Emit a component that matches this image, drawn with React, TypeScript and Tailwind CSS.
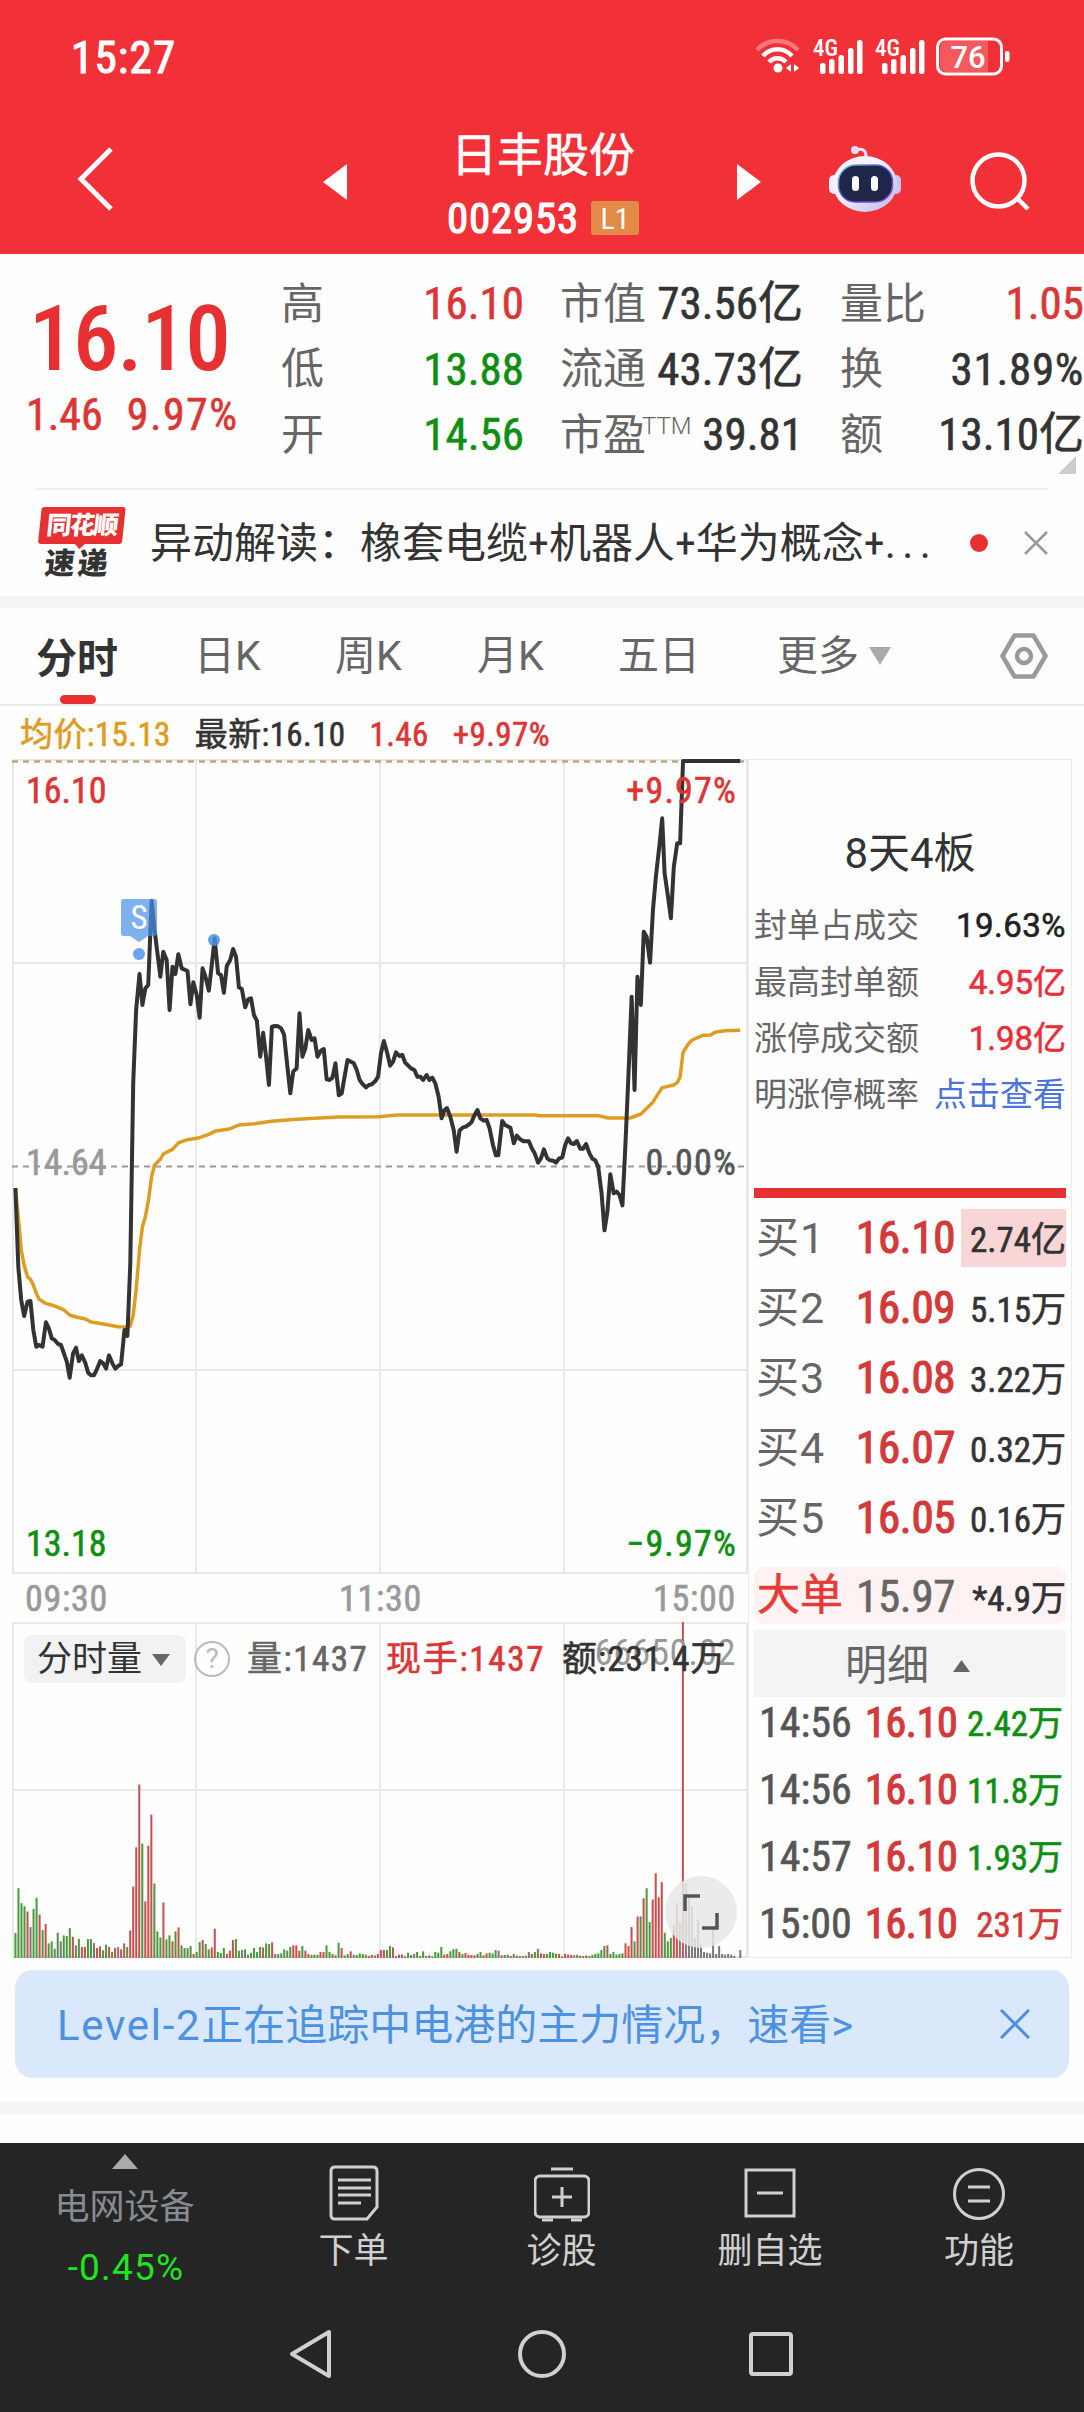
import { ReactNode } from "react";
import clsx from "clsx";

const PRICE_LINE =
    "32,1794 38,2030 44,2130 50,2178 57,2135 63,2133 69,2220 75,2270 81,2265 88,2270 95,2197 101,2215 107,2245 113,2250 120,2262 126,2265 132,2290 138,2315 144,2363 151,2290 157,2273 163,2313 169,2296 176,2318 182,2348 188,2356 194,2356 200,2338 207,2313 213,2320 219,2336 225,2296 232,2320 238,2336 244,2328 250,2323 257,2220 263,2238 269,2020 275,1480 281,1260 288,1152 294,1245 300,1195 306,1185 313,932 319,1020 325,1090 331,1160 337,1085 344,1110 350,1260 356,1130 362,1152 368,1093 375,1135 387,1143 393,1243 399,1177 406,1215 412,1283 418,1135 424,1160 431,1202 437,1125 443,1045 450,1150 456,1155 462,1208 468,1128 475,1110 481,1077 487,1100 493,1192 499,1197 506,1252 512,1228 518,1225 524,1275 530,1292 537,1400 543,1328 549,1400 555,1485 561,1310 567,1308 574,1309 580,1315 586,1333 593,1430 599,1510 605,1445 612,1435 618,1270 624,1400 630,1375 636,1320 643,1350 649,1345 655,1400 662,1382 668,1377 674,1468 680,1470 686,1463 692,1420 699,1516 705,1510 711,1460 717,1410 730,1420 736,1440 742,1470 748,1482 755,1492 761,1485 767,1483 774,1474 780,1460 786,1390 792,1353 799,1390 805,1427 811,1415 817,1387 824,1398 830,1395 836,1418 848,1435 855,1440 861,1460 867,1460 873,1470 880,1455 886,1470 892,1463 898,1480 905,1520 911,1585 917,1560 922,1554 929,1580 936,1620 942,1685 948,1622 955,1612 961,1610 967,1604 973,1596 979,1575 985,1560 991,1585 998,1592 1004,1590 1010,1615 1017,1665 1023,1696 1028,1696 1036,1593 1042,1605 1053,1613 1060,1660 1066,1637 1073,1648 1080,1654 1091,1654 1097,1675 1103,1690 1110,1718 1116,1705 1122,1678 1129,1705 1135,1711 1141,1712 1147,1718 1153,1706 1160,1702 1166,1665 1172,1645 1178,1660 1184,1662 1190,1653 1197,1676 1203,1676 1209,1662 1216,1690 1222,1706 1228,1711 1234,1730 1241,1810 1247,1921 1253,1865 1259,1753 1266,1810 1272,1805 1278,1815 1284,1846 1290,1670 1296,1470 1303,1220 1309,1500 1315,1160 1322,1245 1328,1025 1334,1040 1341,1118 1347,960 1353,860 1360,770 1366,685 1371,850 1378,920 1384,985 1390,830 1397,760 1403,760 1409,513 1527,513";

const AVG_LINE =
    "32,1794 38,1880 44,1980 50,2025 57,2060 63,2068 69,2085 75,2110 81,2128 94,2140 107,2145 120,2152 132,2160 144,2175 157,2181 176,2187 188,2196 213,2202 244,2210 263,2211 269,2208 275,2175 281,2100 288,1980 294,1910 300,1880 306,1835 313,1760 319,1725 331,1708 337,1692 356,1678 369,1658 387,1649 412,1643 431,1633 443,1624 475,1616 493,1605 525,1601 560,1594 612,1588 650,1585 700,1581 780,1580 820,1575 1105,1575 1112,1577 1234,1577 1255,1584 1300,1584 1322,1572 1345,1540 1366,1493 1390,1485 1397,1478 1403,1460 1409,1387 1420,1362 1428,1350 1450,1336 1466,1335 1475,1327 1495,1322 1527,1321";

// one entry per minute: colour letter (g down, r up, k flat) + height
const VOLUME =
    "g75 g210 g165 g156 r140 k93 g148 g181 r131 g84 r102 g44 g50 k28 g76 k50 g68 g66 g90 r64 k38 g57 r33 r33 g57 g57 k45 r30 r35 g23 g40 r33 g18 r30 k33 r26 r44 g33 r83 r215 r333 r522 g344 r170 r338 r431 g224 g80 g62 r167 g56 g68 r50 g80 r92 g38 g30 k30 g36 r12 g18 g48 r54 g42 g26 r32 r88 g18 g15 g30 r12 r22 r54 g57 g22 k24 g26 k10 g16 g30 g18 g33 r32 g44 g42 r47 k12 k12 g14 g26 g22 g33 r38 r38 r22 g36 r22 r12 g9 g10 g9 r18 r18 g38 g18 r12 g8 g46 r30 k8 g12 r20 k10 g9 g14 g12 g10 r6 r9 g8 r12 r24 r24 g24 g36 r32 k6 r10 r10 g5 g16 g9 k12 g18 k6 g20 g6 r8 g5 g18 g16 g33 r10 r12 g20 g26 g28 r18 g12 r15 " +
    "r10 r9 r8 g12 g18 r8 r14 g16 g14 g24 k22 r8 g9 g10 r6 g12 r7 g6 k6 g7 k18 r12 g18 g27 r14 r12 g12 g18 g16 g13 r12 g5 r12 r10 r9 g8 g10 r7 g6 r8 g6 g9 " +
    "g12 g14 g24 g36 r38 g12 g18 g10 g12 g14 r44 r36 r93 g50 r125 g125 r180 g210 g108 r176 r255 r183 r228 g76 g50 g60 r98 r165 k108 r1011 k225 k185 k155 k60 k115 k40 k18 k16 k14 k95 k12 k36 k12 k10 k12 k10 k6 k0 k24";

const BAR_COLOR: Record<string, string> = { g: "#4c9a3f", r: "#c8504e", k: "#7a7a7a" };

// Roboto has nothing between 400 and 500, a thin outline gives the weight in between
const SEMI = "[-webkit-text-stroke:0.6px_currentcolor]";
const STRONG = "[-webkit-text-stroke:1.2px_currentcolor]";

const QUOTES = [
    [
        { label: "高", value: "16.10", color: "text-[#dc3535]" },
        { label: "市值", value: "73.56亿", color: "text-[#333]" },
        { label: "量比", value: "1.05", color: "text-[#dc3535]" },
    ],
    [
        { label: "低", value: "13.88", color: "text-[#0f8f12]" },
        { label: "流通", value: "43.73亿", color: "text-[#333]" },
        { label: "换", value: "31.89%", color: "text-[#333] tracking-[0.7px]" },
    ],
    [
        { label: "开", value: "14.56", color: "text-[#0f8f12]" },
        { label: "市盈", value: "39.81", color: "text-[#333]", sup: "TTM" },
        { label: "额", value: "13.10亿", color: "text-[#333]" },
    ],
];

const SEAL_ROWS = [
    { label: "封单占成交", value: "19.63%", color: "text-[#222]" },
    { label: "最高封单额", value: "4.95亿", color: "text-[#ea2f3b]" },
    { label: "涨停成交额", value: "1.98亿", color: "text-[#ea2f3b]" },
    { label: "明涨停概率", value: "点击查看", color: "text-[#4a74dc]" },
];

const BIDS = [
    { label: "买1", price: "16.10", qty: "2.74亿" },
    { label: "买2", price: "16.09", qty: "5.15万" },
    { label: "买3", price: "16.08", qty: "3.22万" },
    { label: "买4", price: "16.07", qty: "0.32万" },
    { label: "买5", price: "16.05", qty: "0.16万" },
];

const TRADES = [
    { time: "14:56", qty: "2.42万", color: "text-[#0f8f12]" },
    { time: "14:56", qty: "11.8万", color: "text-[#0f8f12]" },
    { time: "14:57", qty: "1.93万", color: "text-[#0f8f12]" },
    { time: "15:00", qty: "231万", color: "text-[#d43a3a]" },
];

export default function App() {
    return (
        <div className="flex h-[2412px] w-[1084px] flex-col overflow-hidden bg-[#fefefe] font-['Roboto','Noto_Sans_CJK_SC',sans-serif] font-stretch-condensed whitespace-nowrap text-[#333]">
            <Header />
            <Quote />
            <News />
            <div className="h-3 shrink-0 bg-[#f4f4f4]" />
            <Tabs />
            <Summary />
            <div className="flex h-[1199px] shrink-0 pl-3">
                <div className="w-[736px]">
                    <PriceChart />
                    <div className={clsx("flex h-[48px] items-center justify-between pt-[2px] pr-[12px] pl-[13px] text-[36px] tracking-[0.7px] text-[#999]", SEMI)}>
                        <span>09:30</span>
                        <span>11:30</span>
                        <span>15:00</span>
                    </div>
                    <VolumeChart />
                </div>
                <SidePanel />
            </div>
            <Banner />
            <div className="mt-6 h-3 shrink-0 bg-[#f4f4f4]" />
            <BottomBar />
        </div>
    );
}

function Header() {
    return (
        <header className="flex h-[254px] shrink-0 flex-col bg-[#f23038] text-white">
            <div className="flex h-[114px] items-center justify-between pr-[73px] pl-[71px]">
                <span className={clsx("pt-[2px] text-[45px] tracking-[1.200px]", STRONG)}>15:27</span>
                <StatusIcons />
            </div>
            <div className="flex h-[140px] items-start pl-[77px]">
                <svg className="mt-[32px] h-[66px] w-[37px]" viewBox="0 0 37 66" fill="none" stroke="#fff" strokeWidth="5">
                    <path d="M34 3 4 33l30 30" />
                </svg>
                <svg className="mt-[50px] ml-[209px] h-9 w-6" viewBox="0 0 24 36"><path d="M24 0v36L0 18z" fill="#fff" /></svg>
                <div className="ml-[88px] flex w-[216px] flex-col items-center">
                    <h1 className={clsx("mt-[13px] text-[46px] leading-[56px] font-normal", SEMI)}>日丰股份</h1>
                    <div className="mt-[13px] flex items-center gap-3">
                        <span className={clsx("text-[43px] leading-[44px] tracking-[0.8px]", STRONG)}>002953</span>
                        <span className="flex h-[34px] w-12 items-center justify-center rounded-[3px] bg-[#e28b49] text-[30px]">L1</span>
                    </div>
                </div>
                <svg className="mt-[50px] ml-[86px] h-9 w-6" viewBox="0 0 24 36"><path d="M0 0v36l24-18z" fill="#fff" /></svg>
                <Robot />
                <svg className="mt-[38px] ml-[69px] h-[60px] w-[61px]" viewBox="0 0 61 60" fill="none" stroke="#fff" strokeWidth="4.5">
                    <circle cx="28.500" cy="28.500" r="26" />
                    <path d="m48 47 10 10" />
                </svg>
            </div>
        </header>
    );
}

function StatusIcons() {
    return (
        <svg className="h-[40px] w-[256px] overflow-visible" viewBox="0 0 256 40" fill="#fff">
            <g fill="none" stroke="#fff" strokeWidth="4.5">
                <path d="M2 13c11-12 30-12 41 0" opacity=".35" />
                <path d="M8 19c8-9 21-9 29 0" />
                <path d="M14 25c5-5 12-5 17 0" />
            </g>
            <circle cx="23" cy="31" r="4.500" />
            <path d="m31 31 5-4v8zM44 31l-5-4v8z" />
            <Signal x={58} />
            <Signal x={120} />
            <rect x="182.500" y="2" width="64" height="35" rx="8" fill="none" stroke="#fff" strokeWidth="3" />
            <path d="M192 4h41v31h-41q-7 0-7-7V11q0-7 7-7" opacity=".2" />
            <rect x="250" y="14" width="4.500" height="11" rx="2" />
            <text x="213" y="30.500" fontSize="31" fontWeight="500" textAnchor="middle" className="font-stretch-normal">76</text>
        </svg>
    );
}

function Signal({ x }: { x: number }) {
    return (
        <g transform={`translate(${x} 0)`}>
            <text x="0" y="19" fontSize="23" fontWeight="500">4G</text>
            <rect x="7" y="26" width="5.500" height="11" rx="2.500" />
            <rect x="16" y="22" width="5.500" height="15" rx="2.500" />
            <rect x="25.500" y="18" width="5.500" height="19" rx="2.500" />
            <rect x="35" y="11" width="5.500" height="26" rx="2.500" />
            <rect x="44" y="3" width="5.500" height="34" rx="2.500" />
        </g>
    );
}

function Robot() {
    return (
        <svg className="mt-[31px] ml-[68px] h-[68px] w-[72px]" viewBox="0 0 72 68">
            <defs>
                <linearGradient id="shell" x1="0" y1="0" x2="1" y2="1">
                    <stop offset=".4" stopColor="#f6f3fc" />
                    <stop offset="1" stopColor="#b9b4ea" />
                </linearGradient>
                <linearGradient id="rim" x1="0" y1="0" x2="1" y2="1">
                    <stop offset="0" stopColor="#7fd6e8" />
                    <stop offset=".5" stopColor="#4a3fc0" />
                    <stop offset="1" stopColor="#a04ee0" />
                </linearGradient>
            </defs>
            <path d="M27 5c6-2 10 0 10 6" fill="none" stroke="#eee6fa" strokeWidth="3" />
            <circle cx="26" cy="5" r="4" fill="#e6dcf8" />
            <rect x="0" y="30" width="10" height="19" rx="5" fill="#f0ecfb" />
            <rect x="62" y="30" width="10" height="19" rx="5" fill="#c9c5f0" />
            <ellipse cx="36" cy="39" rx="32" ry="28" fill="url(#shell)" />
            <rect x="9.500" y="20" width="54" height="37" rx="17" fill="#1e2748" stroke="url(#rim)" strokeWidth="1.500" />
            <rect x="23" y="31" width="7" height="15" rx="3.500" fill="#fff" />
            <rect x="42" y="31" width="7" height="15" rx="3.500" fill="#fff" />
        </svg>
    );
}

function Quote() {
    return (
        <section className="relative flex h-[234px] shrink-0 pt-4">
            <div className="w-[281px] text-[#dc3535]">
                <div className="mt-[27px] pl-[29px] text-[91px] leading-[84px] font-medium tracking-[-1.400px] text-[#e63031]">16.10</div>
                <div className={clsx("mt-[10px] flex gap-[24px] pl-[26px] text-[44px] leading-[48px]", SEMI)}>
                    <span>1.46</span>
                    <span className="tracking-[1.400px]">9.97%</span>
                </div>
            </div>
            <div className="flex-1">
                {QUOTES.map((row, i) => (
                    <div key={i} className="grid h-[65.500px] grid-cols-[243px_36px_243px_37px_244px] items-center text-[45px]">
                        {row.map((cell, j) => (
                            <div key={cell.label} className="flex items-center justify-between" style={{ gridColumn: j * 2 + 1 }}>
                                <span className="flex text-[43px] text-[#666]">
                                    {cell.label}
                                    {cell.sup && <sup className="top-0 mt-2 -ml-1 text-[24px] leading-[30px] font-light font-stretch-normal">{cell.sup}</sup>}
                                </span>
                                <span className={clsx(SEMI, cell.color)}>{cell.value}</span>
                            </div>
                        ))}
                    </div>
                ))}
            </div>
            <svg className="absolute right-2 bottom-[14px] h-[18px] w-[18px]" viewBox="0 0 18 18"><path d="M18 0v18H0z" fill="#ccc" /></svg>
        </section>
    );
}

function News() {
    return (
        <section className="flex h-[108px] shrink-0 items-center px-9">
            <div className="flex h-full flex-1 items-center border-t-2 border-[#efefef]">
                <div className="flex w-[88px] -skew-x-6 flex-col items-center">
                    <div className="relative flex h-[37px] w-[84px] items-center justify-center rounded-[3px] bg-[#e63031] text-[25px] font-black tracking-[-1.500px] text-white">
                        同花顺
                        <span className="absolute -bottom-[5px] h-0 w-0 border-x-[6px] border-t-[6px] border-x-transparent border-t-[#e63031]" />
                    </div>
                    <div className="mt-1 text-[30px] leading-[31px] font-black tracking-[3px]">速递</div>
                </div>
                <span className="ml-[26px] w-[785px] text-[42px]">
                    异动解读：橡套电缆+机器人+华为概念+<span className="tracking-[6.500px]">...</span>
                </span>
                <span className="ml-[35px] h-[18px] w-[18px] rounded-full bg-[#e63031]" />
                <svg className="ml-auto h-6 w-6" viewBox="0 0 24 24" stroke="#999" strokeWidth="2.500"><path d="m1 1 22 22M23 1 1 23" /></svg>
            </div>
        </section>
    );
}

function Tabs() {
    return (
        <nav className="flex h-[98px] shrink-0 items-center border-b-2 border-[#e8e8e8] pl-9 text-[41px] text-[#666]">
            <div className="relative flex h-full w-[158px] items-center font-['Noto_Sans_CJK_SC',sans-serif] font-bold text-[#333]">
                分时
                <span className="absolute bottom-0 left-6 h-[9px] w-9 rounded-full bg-[#e63031]" />
            </div>
            <span className="w-[141px] pt-[2px] font-stretch-normal">日K</span>
            <span className="w-[142px] pt-[2px] font-stretch-normal">周K</span>
            <span className="w-[141px] pt-[2px] font-stretch-normal">月K</span>
            <span className="w-[159px] pt-[2px]">五日</span>
            <span className="pt-[2px]">更多</span>
            <svg className="ml-[10px] h-[18px] w-[22px]" viewBox="0 0 22 18"><path d="M0 0h22L11 18z" fill="#aaa" /></svg>
            <svg className="mr-9 ml-auto h-[46px] w-[48px]" viewBox="0 0 48 46" fill="none" stroke="#999" strokeWidth="4.500" strokeLinejoin="round">
                <path d="M14.500 2.500h19L45.500 23l-12 20.500h-19L2.500 23z" />
                <circle cx="24" cy="23" r="7" />
            </svg>
        </nav>
    );
}

function Summary() {
    return (
        <div className={clsx("flex h-[53px] shrink-0 items-center gap-[24px] pt-[5px] pl-[20px] text-[33px] tracking-[0.400px] text-[#dc3535]", SEMI)}>
            <span className="text-[#dd9d22]">均价:15.13</span>
            <span className="text-[#333]">最新:16.10</span>
            <span>1.46</span>
            <span>+9.97%</span>
        </div>
    );
}

function PriceChart() {
    return (
        <div className="relative h-[815px] w-[736px] text-[36px] leading-none">
            <svg className="h-full w-full" viewBox="0 0 736 815" fill="none">
                <g stroke="#e8e8e8" strokeWidth="2">
                    <path d="M1 1h734v813H1zM184 1v813M368 1v813M552 1v813M1 204h734M1 611h734" />
                </g>
                <path d="M0 407.500h736" stroke="#999" strokeWidth="2" strokeDasharray="6 5" />
                <path d="M0 2.500h736" stroke="#c2a478" strokeWidth="2.500" strokeDasharray="6 5" />
                <svg viewBox="25 507 1518 2445" width="736" height="815" preserveAspectRatio="none" overflow="visible">
                    <polyline points={AVG_LINE} stroke="#dd9d22" strokeWidth="3.500" strokeLinejoin="round" vectorEffect="non-scaling-stroke" />
                    <polyline points={PRICE_LINE} stroke="#333" strokeWidth="4" strokeLinejoin="round" vectorEffect="non-scaling-stroke" />
                </svg>
                <rect x="109" y="140" width="36" height="37" rx="3" fill="#4a90e8" opacity=".7" />
                <path d="M118 177h18l-9 6z" fill="#4a90e8" opacity=".7" />
                <text x="127" y="170" fontSize="33" fill="#fff" textAnchor="middle">S</text>
                <circle cx="127" cy="195" r="6" fill="#6aa5ee" />
                <circle cx="202" cy="181" r="6" fill="#4a90e8" opacity=".85" />
            </svg>
            <div className={SEMI}>
                <span className="absolute top-[14px] left-[14px] text-[#dc3535]">16.10</span>
                <span className="absolute top-[14px] right-[11px] tracking-[1.200px] text-[#dc3535]">+9.97%</span>
                <span className="absolute top-[386px] left-[14px] text-[#999]">14.64</span>
                <span className="absolute top-[386px] right-[11px] tracking-[1.200px] text-[#555]">0.00%</span>
                <span className="absolute top-[767px] left-[14px] text-[#0f8f12]">13.18</span>
                <span className="absolute top-[767px] right-[11px] tracking-[1.200px] text-[#0f8f12]">−9.97%</span>
            </div>
        </div>
    );
}

function VolumeChart() {
    return (
        <div className="relative h-[336px] w-[736px]">
            <svg className="absolute inset-0 h-full w-full" viewBox="0 0 736 336" fill="none">
                <path d="M1 1h734v334H1zM184 1v334M368 1v334M552 1v334M1 168h734" stroke="#e8e8e8" strokeWidth="2" />
                <svg viewBox="25 0 1518 1011" width="736" height="336" preserveAspectRatio="none">
                    {VOLUME.split(" ").map((bar, i) => {
                        const h = Number(bar.slice(1));
                        return <rect key={i} x={30 + i * 6.229} y={1011 - h} width="4.200" height={h} fill={BAR_COLOR[bar[0]]} />;
                    })}
                </svg>
            </svg>
            <span className="absolute top-[7px] right-[12px] text-[37px] leading-[48px] tracking-[0.5px] text-[#999]">66650.02</span>
            <div className="relative flex items-center pt-3 pl-3 text-[35px] leading-[48px]">
                <span className="flex h-12 w-[162px] items-center gap-[10px] rounded-lg bg-[#f2f2f2] pt-[2px] pl-[13px]">
                    分时量
                    <svg className="h-3 w-[18px]" viewBox="0 0 18 12"><path d="M0 0h18L9 12z" fill="#666" /></svg>
                </span>
                <span className="ml-2 flex h-9 w-9 items-center justify-center rounded-full border-2 border-[#bbb] text-[28px] text-[#bbb] font-stretch-normal">?</span>
                <div className={clsx("ml-[17px] flex pt-[2px]", SEMI)}>
                    <span className="w-[139px] tracking-[1.500px] text-[#666]">量:1437</span>
                    <span className="w-[176px] tracking-[1.700px] text-[#dc3535]">现手:1437</span>
                    <span className="tracking-[1px]">额:231.4万</span>
                </div>
            </div>
            <div className="absolute right-[11px] bottom-[10px] flex h-[72px] w-[72px] items-center justify-center rounded-full bg-[#e8e8e8]/85">
                <svg className="h-9 w-9" viewBox="0 0 36 36" fill="none" stroke="#555" strokeWidth="3.500"><path d="M2 17V2h15M34 19v15H19" /></svg>
            </div>
        </div>
    );
}

function SidePanel() {
    return (
        <aside className="flex h-full w-[324px] flex-col border border-[#ececec] pr-[5px] pl-[5px]">
            <div className="mt-[66px] text-center text-[42px] leading-[56px] font-stretch-normal">8天4板</div>
            <div className="mt-[16px] font-stretch-normal">
                {SEAL_ROWS.map((r, i) => (
                    <div key={r.label} className="flex h-[56.300px] items-center justify-between text-[33px] text-[#666]">
                        <span>{r.label}</span>
                        <span className={clsx(r.color, i < 3 && SEMI, i === 0 && "tracking-[0.500px]")}>{r.value}</span>
                    </div>
                ))}
            </div>
            <div className="mt-[65px] h-[10px] bg-[#e63031]" />
            <div className="mt-[5px]">
                {BIDS.map((b, i) => (
                    <Row key={b.label} className="h-[70px] pl-[2px]">
                        <span className="w-[100px] pt-[2px] text-[43px] tracking-[1px] text-[#666] font-stretch-normal">{b.label}</span>
                        <span className={clsx("text-[45px] tracking-[-0.300px] text-[#d43a3a]", STRONG)}>{b.price}</span>
                        <span className={clsx("ml-auto flex h-[58px] w-[105px] items-center justify-end pt-[5px] text-[35px]", SEMI, i === 0 && "bg-[#f9d6d6]")}>{b.qty}</span>
                    </Row>
                ))}
            </div>
            <Row className="mt-[14px] h-[60px] rounded-[10px] bg-[#fef2f2] pl-[3px]">
                <span className={clsx("w-[99px] text-[43px] text-[#e63a34]", SEMI)}>大单</span>
                <span className={clsx("pt-[2px] text-[45px] tracking-[-0.300px] text-[#666]", SEMI)}>15.97</span>
                <span className={clsx("ml-auto pt-[8px] text-[35px]", SEMI)}>*4.9万</span>
            </Row>
            <div className="mt-[6px] flex h-[67px] items-center bg-[#f4f4f4] pt-[4px] pl-[91px] text-[42px] text-[#666]">
                明细
                <svg className="ml-[24px] h-3 w-[17px]" viewBox="0 0 17 12"><path d="M0 12h17L8.500 0z" fill="#666" /></svg>
            </div>
            <div className="-mt-[8px]">
                {TRADES.map((t, i) => (
                    <Row key={i} className="h-[67px] pr-[3px] pl-[5px]">
                        <span className={clsx("w-[106px] text-[42px] text-[#555]", SEMI)}>{t.time}</span>
                        <span className={clsx("text-[42px] tracking-[-0.300px] text-[#d43a3a]", STRONG)}>16.10</span>
                        <span className={clsx("ml-auto pt-1 text-[35px]", SEMI, t.color)}>{t.qty}</span>
                    </Row>
                ))}
            </div>
        </aside>
    );
}

function Row({ children, className }: { children: ReactNode; className: string }) {
    return <div className={clsx("flex items-center leading-none", className)}>{children}</div>;
}

function Banner() {
    return (
        <div className="mx-[15px] mt-3 flex h-[108px] shrink-0 items-center justify-between rounded-[18px] bg-[#d9e8fb] pr-[39px] pl-[42px] text-[42px] text-[#4d92e0] font-stretch-normal">
            <span className="pt-[2px]"><span className="tracking-[1.700px]">Level-2</span>正在追踪中电港的主力情况，速看&gt;</span>
            <svg className="h-[30px] w-[30px]" viewBox="0 0 30 30" stroke="#4a90e2" strokeWidth="3"><path d="m1 1 28 28M29 1 1 29" /></svg>
        </div>
    );
}

function BottomBar() {
    return (
        <footer className="mt-[29px] flex-1 bg-[#252525] text-[35px] text-[#d0d0d0]">
            <div className="flex h-[152px] pl-5">
                <div className="flex w-[209px] flex-col items-center">
                    <svg className="mt-[11px] h-[15px] w-[26px]" viewBox="0 0 26 15"><path d="M0 15h26L13 0z" fill="#aaa" /></svg>
                    <span className="mt-[14px] leading-[50px] text-[#868c92]">电网设备</span>
                    <span className="mt-[10px] pl-[3px] text-[37px] leading-[50px] tracking-[1.200px] text-[#1fe61f] font-stretch-normal">-0.45%</span>
                </div>
                <NavItem label="下单" className="w-[249px]">
                    <path d="M9 4h38q4 0 4 4v36l-10 12H9q-4 0-4-4V8q0-4 4-4z" />
                    <path d="M12 17h33M12 25h33M12 32h33M12 40h23" />
                </NavItem>
                <NavItem label="诊股" className="w-[167px]">
                    <rect x="1" y="13" width="54" height="41" rx="5" />
                    <path d="M17 6h22M28 24v20M18 34h20M8 57h11M37 57h11" />
                </NavItem>
                <NavItem label="删自选" className="w-[250px]">
                    <path d="M4 7h48v46H4zM15 30h26" />
                </NavItem>
                <NavItem label="功能" className="w-[168px]">
                    <circle cx="28" cy="31" r="24.500" />
                    <path d="M17 24h22M17 38h22" />
                </NavItem>
            </div>
            <div className="mt-[33px] flex items-center pl-[288px]">
                <svg className="h-[52px] w-[44px]" viewBox="0 0 44 52" fill="none" stroke="#d0d0d0" strokeWidth="4" strokeLinejoin="round"><path d="M41 4v44L4 26z" /></svg>
                <span className="ml-[186px] h-12 w-12 rounded-full border-4 border-[#d0d0d0]" />
                <span className="ml-[183px] h-[44px] w-[44px] rounded-[4px] border-4 border-[#d0d0d0]" />
            </div>
        </footer>
    );
}

function NavItem({ label, className, children }: { label: string; className: string; children: ReactNode }) {
    return (
        <div className={clsx("flex flex-col items-center", className)}>
            <svg className="mt-[20px] h-[60px] w-[56px]" viewBox="0 0 56 60" fill="none" stroke="#d0d0d0" strokeWidth="3">{children}</svg>
            <span className="mt-1 leading-[50px]">{label}</span>
        </div>
    );
}
